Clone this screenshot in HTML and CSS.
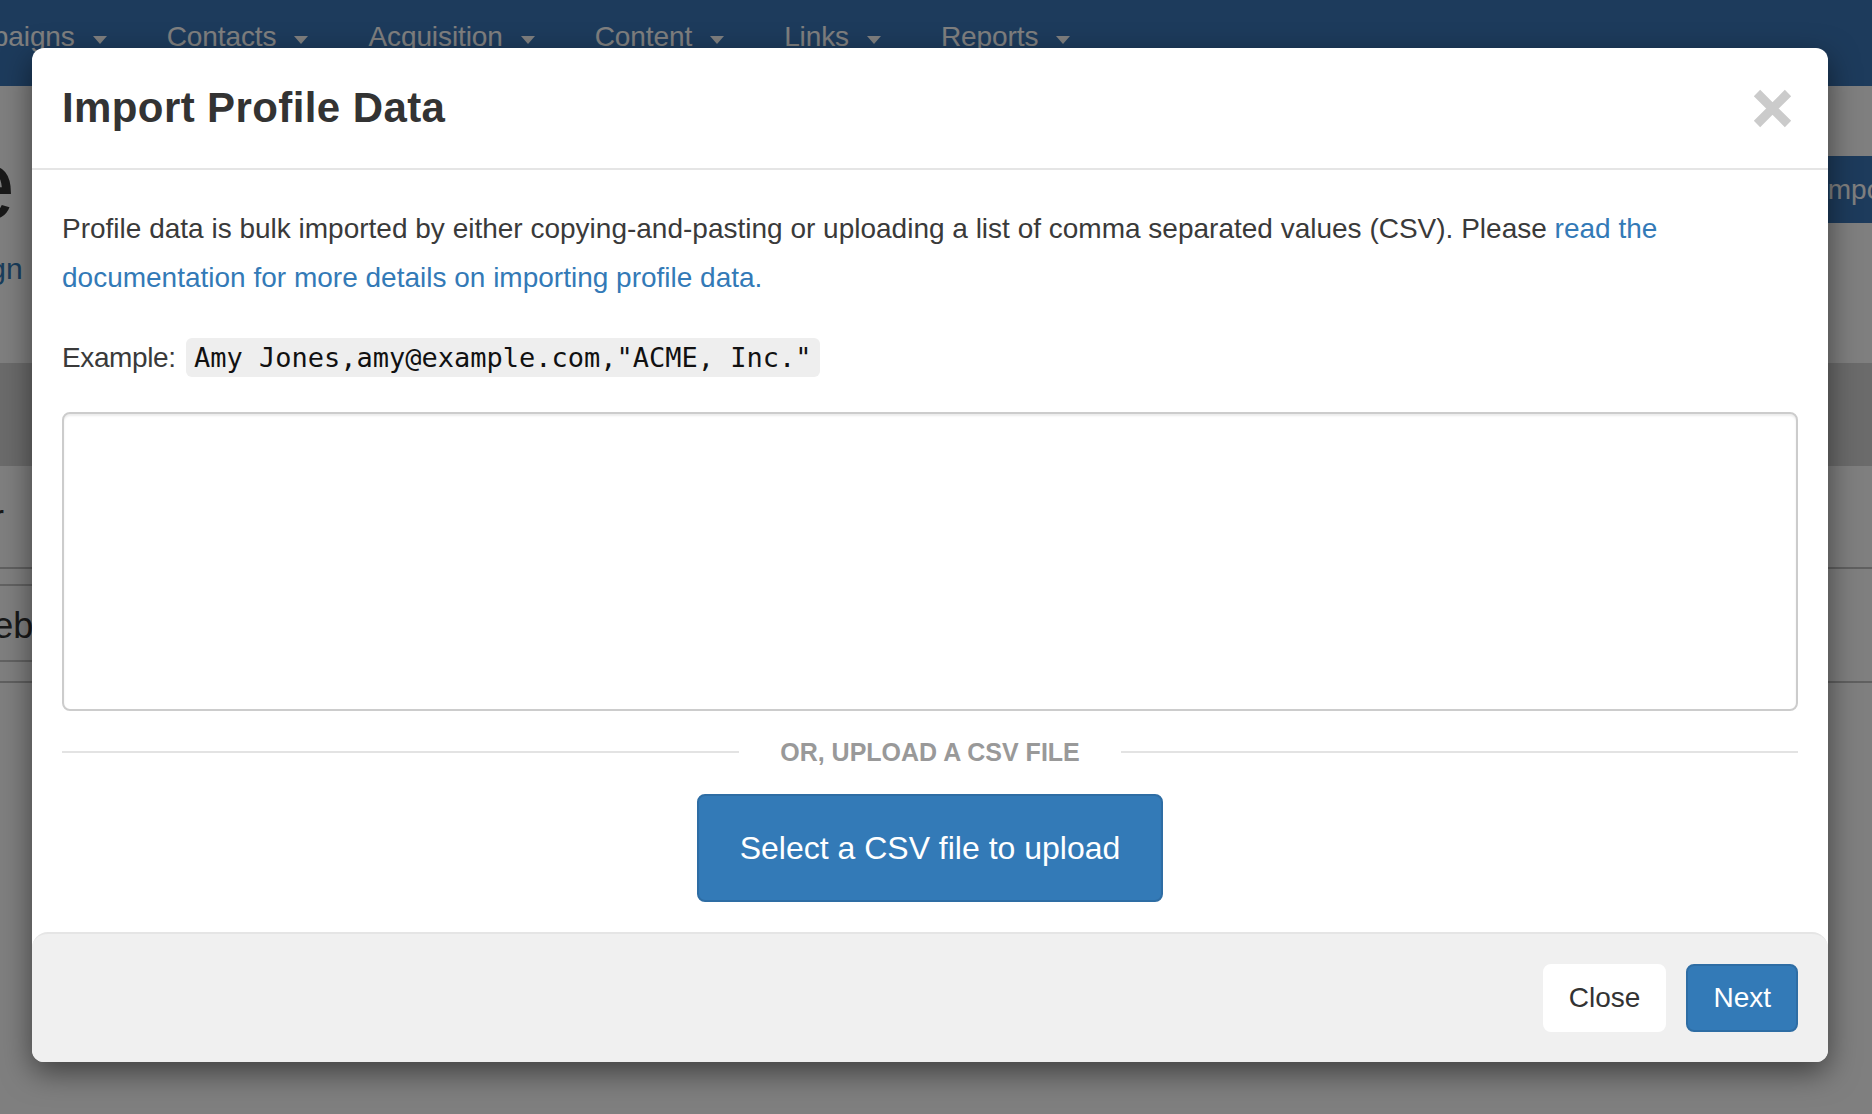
FILE: index.html
```html
<!DOCTYPE html>
<html lang="en">
<head>
<meta charset="utf-8">
<title>Import Profile Data</title>
<link rel="stylesheet" href="styles.css">
</head>
<body>
<div class="page">
  <nav class="navbar">
    <ul class="nav">
      <li>Campaigns<span class="caret"></span></li>
      <li>Contacts<span class="caret"></span></li>
      <li>Acquisition<span class="caret"></span></li>
      <li>Content<span class="caret"></span></li>
      <li>Links<span class="caret"></span></li>
      <li>Reports<span class="caret"></span></li>
    </ul>
  </nav>
  <div class="page-head">
    <div class="titles">
      <h1 class="page-title">Profile</h1>
      <a class="page-sub">Campaign</a>
    </div>
    <button class="btn-import">Import</button>
  </div>
  <div class="band"></div>
  <div class="list-row"><span class="row-a">Filter</span></div>
  <div class="list-row list-row-input"><div class="fake-input"><span class="row-b">Web</span></div></div>
</div>

<div class="backdrop"></div>

<div class="modal">
  <div class="modal-header">
    <h4 class="modal-title">Import Profile Data</h4>
    <button class="close" aria-label="Close">
      <svg width="39" height="39" viewBox="0 0 39 39"><path d="M4 4 L35 35 M35 4 L4 35" stroke="#cbcbcb" stroke-width="9" fill="none"/></svg>
    </button>
  </div>
  <div class="modal-body">
    <p class="intro">Profile data is bulk imported by either copying-and-pasting or uploading a list of comma separated values (CSV). Please <a href="#">read the documentation for more details on importing profile data.</a></p>
    <p class="example">Example: <code>Amy Jones,amy@example.com,"ACME, Inc."</code></p>
    <textarea class="csv-input"></textarea>
    <div class="divider"><span>OR, UPLOAD A CSV FILE</span></div>
    <div class="upload-wrap">
      <button class="btn-upload">Select a CSV file to upload</button>
    </div>
  </div>
  <div class="modal-footer">
    <button class="btn btn-default">Close</button>
    <button class="btn btn-primary">Next</button>
  </div>
</div>
</body>
</html>
```

FILE: styles.css
```css
* { box-sizing: border-box; }
html, body { margin: 0; padding: 0; overflow: hidden; }
body {
  width: 1872px;
  height: 1114px;
  background: #fff;
  font-family: "Liberation Sans", Arial, sans-serif;
  color: #333;
  position: relative;
}

/* ---------- page behind ---------- */
.navbar {
  height: 86px;
  background: #3a76b8;
}
.nav {
  display: flex;
  list-style: none;
  margin: 0 0 0 -96px;
  padding: 0;
}
.nav li {
  display: flex;
  align-items: center;
  padding: 17px 30px 0;
  font-size: 28px;
  line-height: 40px;
  letter-spacing: -0.1px;
  color: #fff;
  white-space: nowrap;
}
.caret {
  display: inline-block;
  margin-left: 18px;
  margin-top: 6px;
  border-top: 8px solid #fff;
  border-left: 7px solid transparent;
  border-right: 7px solid transparent;
}
.page-head {
  display: flex;
  justify-content: space-between;
  align-items: flex-start;
  height: 277px;
}
.titles { display: flex; flex-direction: column; }
.page-title {
  margin: 43px 0 0 -268px;
  font-size: 100px;
  line-height: 110px;
  font-weight: 400;
  color: #333;
}
.page-sub {
  margin: 10px 0 0 -114px;
  font-size: 30px;
  line-height: 40px;
  color: #337ab7;
}
.btn-import {
  margin: 70px -40px 0 0;
  width: 116px;
  height: 67px;
  padding: 0 0 0 24px;
  text-align: left;
  border: 0;
  border-radius: 8px 0 0 8px;
  background: #3a76b8;
  color: #fff;
  font-family: "Liberation Sans", Arial, sans-serif;
  font-size: 28px;
}
.band { height: 103px; background: #d6d6d6; }
.list-row {
  height: 103px;
  border-bottom: 2px solid #c0c0c0;
  font-size: 36px;
  line-height: 103px;
  color: #333;
}
.list-row-input {
  height: 114px;
  padding-top: 15px;
}
.fake-input {
  height: 78px;
  width: 200px;
  margin-left: -140px;
  border-top: 2px solid #c4c4c4;
  border-bottom: 2px solid #c4c4c4;
  line-height: 80px;
  padding-left: 100px;
}
.row-a { margin-left: -76px; }

.backdrop {
  position: absolute;
  inset: 0;
  background: rgba(0, 0, 0, 0.5);
}

/* ---------- modal ---------- */
.modal {
  position: absolute;
  left: 32px;
  top: 48px;
  width: 1796px;
  background: #fff;
  border-radius: 12px;
  box-shadow: 0 10px 30px rgba(0, 0, 0, 0.5);
  overflow: hidden;
}
.modal-header {
  display: flex;
  justify-content: space-between;
  align-items: center;
  padding: 30px;
  border-bottom: 2px solid #e5e5e5;
}
.modal-title {
  margin: 0;
  font-size: 42px;
  line-height: 60px;
  font-weight: 700;
  letter-spacing: 0.4px;
  color: #333;
}
.close {
  width: 39px;
  height: 39px;
  margin-right: 6px;
  padding: 0;
  border: 0;
  background: none;
  display: block;
}
.close svg { display: block; }

.modal-body { padding: 30px; }
.intro {
  margin: 4px 0 31px;
  font-size: 28px;
  line-height: 49px;
  color: #3a3a3a;
}
.intro a { color: #337ab7; text-decoration: none; }
.example {
  margin: 0;
  font-size: 28px;
  line-height: 49px;
  letter-spacing: -0.4px;
  color: #3a3a3a;
}
code {
  margin-left: 3px;
  padding: 4px 8px;
  font-family: "DejaVu Sans Mono", "Liberation Mono", monospace;
  font-size: 27px;
  letter-spacing: 0;
  color: #111;
  background: #eee;
  border-radius: 6px;
}
.csv-input {
  display: block;
  width: 100%;
  height: 299px;
  margin: 30px 0 0;
  border: 2px solid #ccc;
  border-radius: 8px;
  box-shadow: inset 0 2px 2px rgba(0, 0, 0, 0.075);
  resize: none;
  background: #fff;
}
.divider {
  display: flex;
  align-items: center;
  height: 28px;
  margin-top: 27px;
  font-size: 25px;
  line-height: 28px;
  font-weight: 700;
  color: #999;
}
.divider::before,
.divider::after {
  content: "";
  flex: 1;
  height: 2px;
  background: #e3e3e3;
}
.divider span { margin: 0 41px; }
.upload-wrap {
  display: flex;
  justify-content: center;
  margin-top: 28px;
}
.btn-upload {
  padding: 30px 41px;
  font-family: "Liberation Sans", Arial, sans-serif;
  font-size: 32px;
  line-height: 44px;
  color: #fff;
  background: #337ab7;
  border: 2px solid #2e6da4;
  border-radius: 8px;
}

.modal-footer {
  display: flex;
  justify-content: flex-end;
  gap: 20px;
  padding: 30px;
  background: #f0f0f0;
  border-top: 2px solid #e5e5e5;
  border-radius: 16px 16px 0 0;
}
.btn {
  padding: 12px 24px;
  font-family: "Liberation Sans", Arial, sans-serif;
  font-size: 28px;
  line-height: 40px;
  border: 2px solid transparent;
  border-radius: 8px;
}
.btn-default { background: #fff; border-color: #fff; color: #333; }
.btn-primary { padding: 12px 25px; background: #337ab7; border-color: #2e6da4; color: #fff; }
```
